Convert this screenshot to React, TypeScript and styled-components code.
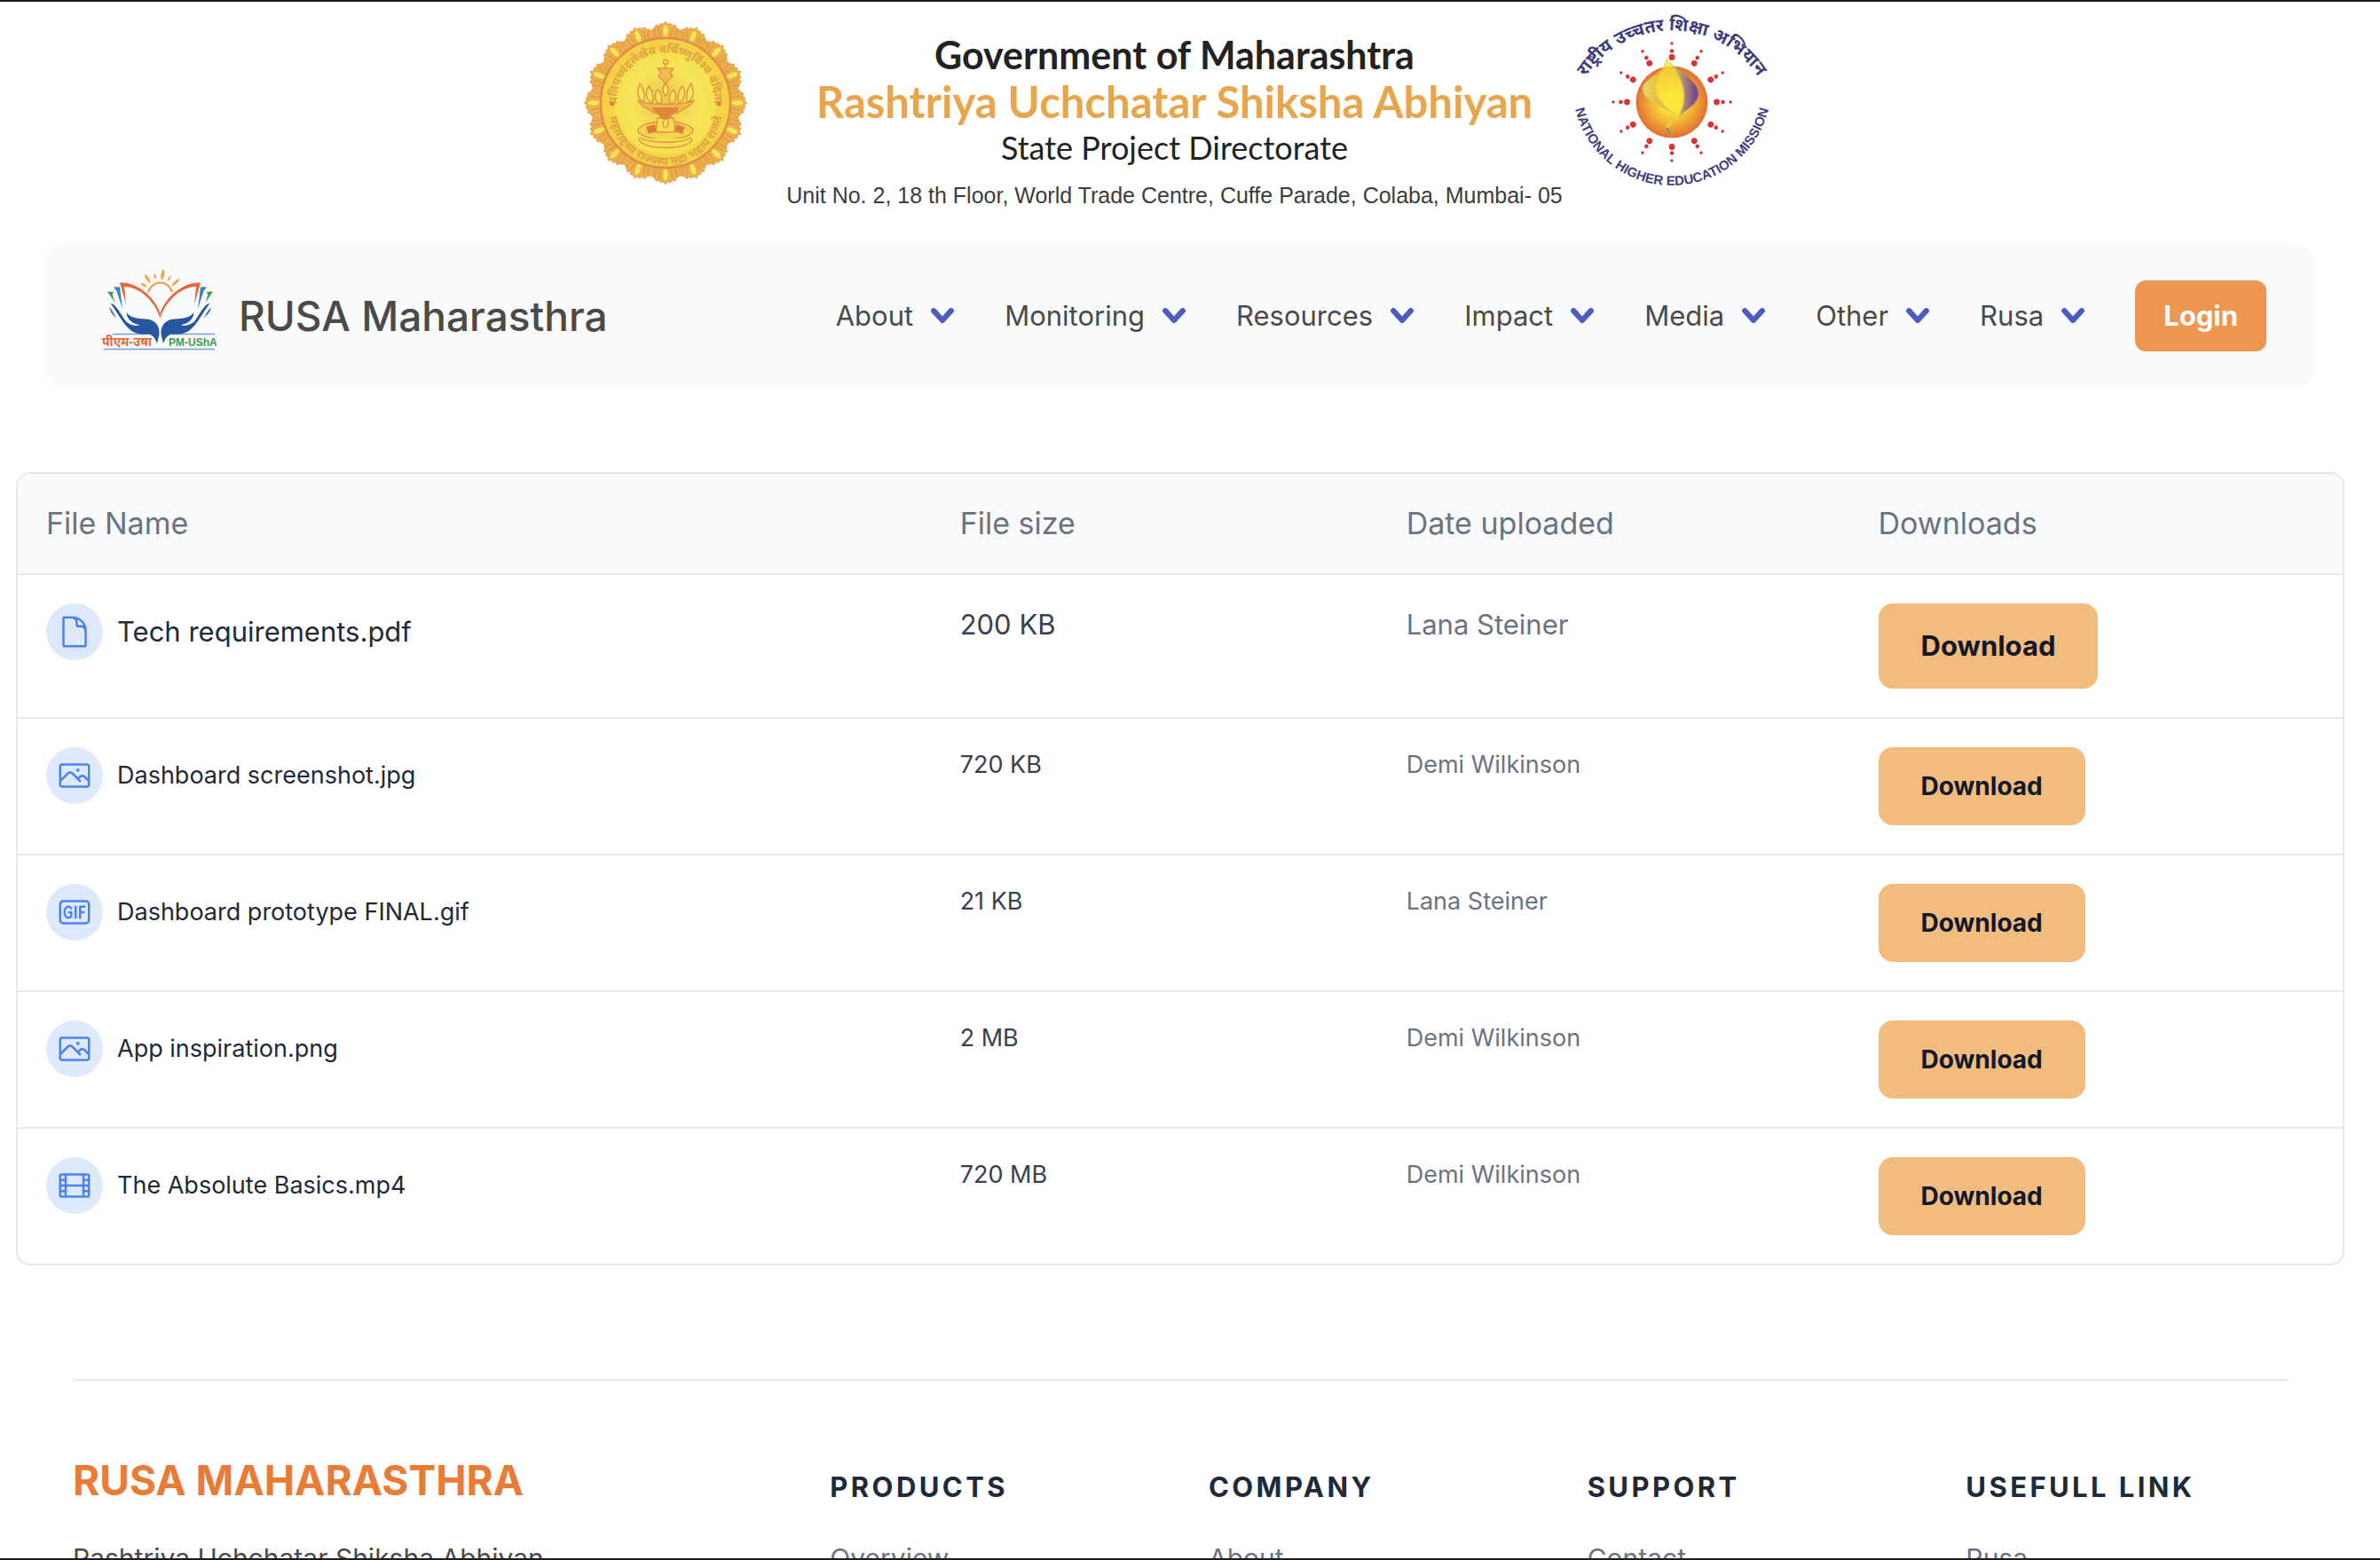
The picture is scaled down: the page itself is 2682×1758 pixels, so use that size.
import React from "react";
import styled, { createGlobalStyle } from "styled-components";
import {
  HiOutlineDocument,
  HiOutlineFilm,
  HiOutlineGif,
  HiOutlinePhoto,
} from "react-icons/hi2";
import type { IconType } from "react-icons";

const GlobalStyle = createGlobalStyle`
  *, *::before, *::after { box-sizing: border-box; }
  body {
    margin: 0;
    background: #fff;
    color: #4a4a4a;
    font-family: Inter, "Liberation Sans", sans-serif;
    font-size: 31px;
    line-height: 48px;
  }
  h1, h2, h3, p, ul { margin: 0; padding: 0; font: inherit; }
  ul { list-style: none; }
  a { color: inherit; text-decoration: none; }
  button { border: 0; font: inherit; cursor: pointer; }
`;

const Page = styled.div`
  height: 100vh;
  overflow: hidden;
  padding-right: 22px;
  border: solid #1b1b1d;
  border-width: 2px 0;
`;

/* Masthead */

const Masthead = styled.header`
  display: flex;
  justify-content: center;
  align-items: flex-start;
  padding: 12px 8px 28px 0;
`;

const SealBox = styled.div`
  display: flex;
  padding: 10px 43px 0 0;
`;

const EmblemBox = styled.div`
  display: flex;
  padding-left: 12px;
`;

const MastheadText = styled.div`
  display: flex;
  flex-direction: column;
  align-items: center;
  padding-top: 22px;
  font-family: Lato, "Liberation Sans", sans-serif;
  line-height: 52px;
  white-space: nowrap;
`;

const Government = styled.p`
  color: #222;
  font-size: 43px;
  font-weight: 700;
`;

const Mission = styled.h1`
  color: #e8a54c;
  font-size: 49px;
  font-weight: 700;
`;

const Directorate = styled.p`
  color: #222;
  font-size: 36px;
`;

const Address = styled.p`
  color: #3c3c3c;
  font-family: "Liberation Sans", Arial, sans-serif;
  font-size: 25px;
  line-height: 56px;
`;

/* Navigation */

const NavBar = styled.nav`
  display: flex;
  align-items: center;
  justify-content: space-between;
  height: 160px;
  margin: 0 50px;
  padding: 0 56px 0 64px;
  border-radius: 24px;
  background: #f9fafc;
`;

const Brand = styled.a`
  display: flex;
  align-items: center;
  gap: 25px;
  font-size: 46px;
  font-weight: 500;
`;

const Menu = styled.ul`
  display: flex;
  align-items: center;
  gap: 57px;
`;

const MenuButton = styled.button`
  display: flex;
  align-items: center;
  gap: 20px;
  padding: 0;
  background: none;
  color: inherit;
`;

const LoginButton = styled.button`
  height: 80px;
  padding: 0 32px;
  border-radius: 12px;
  background: #ee964f;
  color: #fff;
  font-weight: 700;
`;

/* File table */

const TableCard = styled.main`
  margin: 96px 18px 128px;
  overflow: hidden;
  border: 2px solid #e5e7eb;
  border-radius: 16px;
`;

const Table = styled.table`
  width: 100%;
  table-layout: fixed;
  border-spacing: 0;
`;

const Column = styled.col<{ $share: number }>`
  width: ${(p) => p.$share}%;
`;

const HeadCell = styled.th`
  padding: 28px 32px;
  border-bottom: 2px solid #e5e7eb;
  background: #f9fafb;
  color: #6b7280;
  font-size: 34px;
  font-weight: 400;
  line-height: 56px;
  text-align: left;
`;

const Row = styled.tr<{ $large?: boolean }>`
  font-size: ${(p) => (p.$large ? 31 : 27)}px;
  line-height: ${(p) => (p.$large ? 48 : 40)}px;

  &:not(:last-child) > td {
    border-bottom: 2px solid #e5e7eb;
  }
`;

const Cell = styled.td<{ $color?: string }>`
  padding: 32px;
  color: ${(p) => p.$color ?? "#1f2937"};
  vertical-align: top;
`;

const FileName = styled.div`
  display: flex;
  align-items: center;
  gap: 16px;
`;

const FileBadge = styled.span`
  display: grid;
  place-items: center;
  width: 64px;
  height: 64px;
  border-radius: 50%;
  background: #dee9fc;
  color: #4b82f1;
  font-size: 40px;
`;

const DownloadButton = styled.button<{ $large?: boolean }>`
  display: block;
  padding: 24px 48px;
  border-radius: 16px;
  background: #f3bc7f;
  color: #111827;
  font-size: ${(p) => (p.$large ? 31 : 28)}px;
  font-weight: 700;
  line-height: inherit;
`;

/* Footer */

const Footer = styled.footer`
  display: grid;
  grid-template-columns: repeat(6, 1fr);
  gap: 64px;
  margin: 0 82px;
  padding-top: 80px;
  border-top: 2px solid #e5e7eb;
  font-size: 30px;
`;

const FooterAbout = styled.section`
  display: grid;
  grid-column: span 2;
  align-content: start;
  gap: 32px;
`;

const FooterBrand = styled.h2`
  color: #e87c36;
  font-size: 46px;
  font-weight: 700;
  line-height: 64px;
`;

const FooterColumn = styled.section`
  display: grid;
  align-content: start;
  gap: 32px;
  padding-top: 16px;
  color: #6b7280;
`;

const FooterHeading = styled.h3`
  color: #1f2937;
  font-size: 31px;
  font-weight: 700;
  letter-spacing: 0.11em;
  text-transform: uppercase;
  white-space: nowrap;
`;

const LogoText = styled.text`
  font-family: "Liberation Sans", "Noto Sans", sans-serif;
  font-weight: 700;
`;

const Chevron = () => (
  <svg width="26" height="18" viewBox="0 0 26 18" fill="none" aria-hidden="true">
    <path d="M3.2 3.2 13 14 22.8 3.2" stroke="#4e5bc0" strokeWidth="6.2" strokeLinecap="round" strokeLinejoin="round" />
  </svg>
);

const petals = Array.from({ length: 16 }, (_, i) => i * 22.5);

const StateSeal = () => (
  <svg width="186" height="184" viewBox="0 0 186 184" role="img" aria-label="Seal of Maharashtra">
    <defs>
      <radialGradient id="sealFace">
        <stop offset="0" stopColor="#ecc04c" />
        <stop offset="0.55" stopColor="#f6e65a" />
        <stop offset="0.78" stopColor="#f5e04f" />
        <stop offset="0.8" stopColor="#f3d545" />
        <stop offset="1" stopColor="#f4cf48" />
      </radialGradient>
      <path id="sealTop" d="M38.500 98A55 55 0 1 1 147.500 98" />
      <path id="sealBottom" d="M29 98A64 64 0 0 0 157 98" />
    </defs>
    {petals.map((a) => (
      <g key={a} transform={`rotate(${a} 93 92)`}>
        <path
          d="M93 0 95 3 99 2.500 100 5 104 4 105 7 109 10 110 26 76 26 77 10 81 7 82 4 86 5 87 2.500 91 3Z"
          fill="#eab04c"
          stroke="#e59a48"
          strokeWidth="0.8"
        />
        <path d="M80 8 84 22M85 7 88 22M101 7 98 22M106 8 102 22" stroke="#e39245" strokeWidth="1.1" />
      </g>
    ))}
    {petals.map((a) => (
      <ellipse key={a} cx="93" cy="11" rx="3.4" ry="7.400" fill="#f6e558" stroke="#e9a244" strokeWidth="0.8" transform={`rotate(${a} 93 92)`} />
    ))}
    <circle cx="93" cy="92" r="73" fill="url(#sealFace)" stroke="#e28c43" strokeWidth="2.4" />
    <LogoText fontSize="13" fill="#dfa443" textAnchor="middle">
      <textPath href="#sealTop" startOffset="50%">प्रतिपच्चंद्रलेखेव वर्धिष्णुर्विश्व वंदिता</textPath>
    </LogoText>
    <LogoText fontSize="13" fill="#dfa443" textAnchor="middle">
      <textPath href="#sealBottom" startOffset="50%">महाराष्ट्रस्य राज्यस्य मुद्रा भद्राय राजते</textPath>
    </LogoText>
    <circle cx="33" cy="93" r="2.500" fill="#d98039" />
    <circle cx="153" cy="93" r="2.500" fill="#d98039" />
    <g fill="none" stroke="#e09142" strokeWidth="1.4" strokeLinejoin="round">
      <circle cx="93" cy="46" r="2.500" />
      <path d="M93 49V53M84 53H102L98 58 101 62 96 66 93 72 90 66 85 62 88 58Z" fill="#edc04a" />
      <path d="M93 70C88 76 90 82 93 84C96 82 98 76 93 70Z" fill="#f6e65a" />
      <path d="M64 70C60 80 62 88 68 91C71 84 68 76 64 70ZM122 70C126 80 124 88 118 91C115 84 118 76 122 70Z" fill="#f6e65a" />
      <path d="M74 73C69 81 72 89 78 92C80 85 78 78 74 73ZM112 73C117 81 114 89 108 92C106 85 108 78 112 73Z" fill="#f6e65a" />
      <path d="M84 77C79 84 82 91 87 93C90 87 88 81 84 77ZM102 77C107 84 104 91 99 93C96 87 98 81 102 77Z" fill="#f6e65a" />
      <path d="M62 89C72 95 114 95 125 89C122 97 110 99 107 103H79C76 99 65 97 62 89Z" fill="#edbb48" />
      <ellipse cx="93" cy="123" rx="31" ry="10" fill="#f3d54d" />
      <path d="M63 132C63 146 123 146 123 132" fill="#f6df52" />
      <path d="M64 131C75 138 111 138 122 131" />
      <path d="M84 109H102L104 125H82Z" fill="#f6df52" />
      <ellipse cx="93" cy="115" rx="3" ry="5" />
    </g>
    <path d="M78 97H108C107 104 100 103 98 110H88C86 103 79 104 78 97Z" fill="#e0853e" />
    <path d="M71 119 81 116 83 124 74 127ZM115 119 105 116 103 124 112 127Z" fill="#dd7f3b" />
  </svg>
);

const rays = Array.from({ length: 12 }, (_, i) => i * 30);

const MissionEmblem = () => (
  <svg width="222" height="200" viewBox="0 0 222 200" role="img" aria-label="National Higher Education Mission">
    <defs>
      <radialGradient id="sun">
        <stop offset="0.2" stopColor="#fbef3c" />
        <stop offset="0.65" stopColor="#f0a835" />
        <stop offset="1" stopColor="#e07032" />
      </radialGradient>
      <linearGradient id="flameEdge">
        <stop offset="0" stopColor="#ead75a" />
        <stop offset="0.4" stopColor="#bfa070" />
        <stop offset="0.9" stopColor="#774a8c" />
      </linearGradient>
      <linearGradient id="flameLeft">
        <stop offset="0" stopColor="#e8d763" />
        <stop offset="0.6" stopColor="#e8b243" />
        <stop offset="1" stopColor="#cbb070" />
      </linearGradient>
      <path id="emblemTop" d="M8 82A117 117 0 0 1 214 82" />
      <path id="emblemBottom" d="M1 104A112 112 0 0 0 221 104" />
    </defs>
    <LogoText fontSize="20" fill="#3f3c80" textAnchor="middle">
      <textPath href="#emblemTop" startOffset="50%">राष्ट्रीय उच्चतर शिक्षा अभियान</textPath>
    </LogoText>
    <LogoText fontSize="15" fill="#3f3c80" textAnchor="middle">
      <textPath href="#emblemBottom" startOffset="50%">NATIONAL HIGHER EDUCATION MISSION</textPath>
    </LogoText>
    {rays.map((a) => (
      <g key={a} fill="#d93338" transform={`rotate(${a} 111 101)`}>
        <circle cx="111" cy="50.500" r="3.400" />
        <circle cx="111" cy="43.500" r="2.300" />
        <circle cx="111" cy="35" r="1.700" />
      </g>
    ))}
    <circle cx="111" cy="101" r="40.500" fill="url(#sun)" />
    <path d="M105 52C103 70 78 74 78 87C79 100 106 108 118 118C100 104 92 98 92 82C94 72 102 64 105 52Z" fill="url(#flameLeft)" />
    <path d="M105 52C116 66 141 76 141 92C140 104 126 110 118 118C130 94 122 72 105 52Z" fill="url(#flameEdge)" />
    <path d="M105 52C119 68 134 92 118 118C103 104 90 96 93 80C95 70 103 66 105 52Z" fill="#f8e63a" fillOpacity="0.75" stroke="#e8c84a" strokeWidth="1" />
    <path d="M118 119C106 124 104 130 109 137" fill="none" stroke="#ecd23c" strokeWidth="3.500" strokeLinecap="round" />
    <path d="M106 131 109 137" stroke="#9a8f50" strokeWidth="3" strokeLinecap="round" />
  </svg>
);

const HalfLogo = () => (
  <g>
    <path d="M14 20.500H21L24 45 17.500 25Z" fill="#3b7cc4" />
    <path d="M7 25.500 14.500 26 12.500 28.500 15.500 38Z" fill="#3a9b4c" />
    <path d="M21 15.500C40 14 61 32 66.500 50V56C60 34 41 20 26 20L28 40Z" fill="#e8683a" />
    <path
      d="M10.500 39C16 39 20 48 27 58C31 63 38 65 43.500 63.500C38 62 29 59 28.500 49C33 55 40 56 50 56.500C62 57 66 65 65.500 74L63 84C60 76 57 73 50 73.500C40 74 34 71 28 64C20 54 17 47 10.500 39Z"
      fill="#2556a0"
    />
    <path d="M9 43C12 46 14 50 17 55C13 52 10 48 9 43Z" fill="#2556a0" />
  </g>
);

const BrandLogo = () => (
  <svg width="130" height="106" viewBox="0 0 130 106" role="img" aria-label="PM-USHA">
    <g fill="#f0a23c">
      <path d="M70 0C72 5 71 10 68.500 13C66.500 9 67 4 70 0Z" />
      <path d="M49 6C53 8 55 12 55.500 16C51 14 49 10 49 6Z" />
      <path d="M59.500 5C62 7 62.500 10 61.500 12C59.500 10 59 8 59.500 5Z" />
      <path d="M78.500 7.500C79 10 77 13 74.500 14C75 11 76 9 78.500 7.500Z" />
      <path d="M88.500 11C87 15 84 18 79 19.500C81 15 84 12 88.500 11Z" />
      <path d="M44.500 16C48 16 51 18 51.500 21C48 20.500 46 19 44.500 16Z" />
    </g>
    <path d="M53 26C58 12 75 12 80 26" fill="none" stroke="#f0a23c" strokeWidth="2.400" />
    <path d="M13 73.500H52M80 73.500H128M3 90.500H128" stroke="#7b9ccf" strokeWidth="1.400" />
    <HalfLogo />
    <g transform="matrix(-1 0 0 1 133 0)">
      <HalfLogo />
    </g>
    <LogoText x="1" y="87" fontSize="14" fill="#e8683a">पीएम-उषा</LogoText>
    <LogoText x="76" y="87" fontSize="12" fill="#3a9b4c">PM-UShA</LogoText>
  </svg>
);

const menu = ["About", "Monitoring", "Resources", "Impact", "Media", "Other", "Rusa"];

const files: { name: string; size: string; owner: string; icon: IconType; large?: boolean }[] = [
  { name: "Tech requirements.pdf", size: "200 KB", owner: "Lana Steiner", icon: HiOutlineDocument, large: true },
  { name: "Dashboard screenshot.jpg", size: "720 KB", owner: "Demi Wilkinson", icon: HiOutlinePhoto },
  { name: "Dashboard prototype FINAL.gif", size: "21 KB", owner: "Lana Steiner", icon: HiOutlineGif },
  { name: "App inspiration.png", size: "2 MB", owner: "Demi Wilkinson", icon: HiOutlinePhoto },
  { name: "The Absolute Basics.mp4", size: "720 MB", owner: "Demi Wilkinson", icon: HiOutlineFilm },
];

const footerLinks = [
  { title: "Products", link: "Overview" },
  { title: "Company", link: "About" },
  { title: "Support", link: "Contact" },
  { title: "Usefull Link", link: "Rusa" },
];

export default function App() {
  return (
    <Page>
      <GlobalStyle />
      <Masthead>
        <SealBox>
          <StateSeal />
        </SealBox>
        <MastheadText>
          <Government>Government of Maharashtra</Government>
          <Mission>Rashtriya Uchchatar Shiksha Abhiyan</Mission>
          <Directorate>State Project Directorate</Directorate>
          <Address>Unit No. 2, 18 th Floor, World Trade Centre, Cuffe Parade, Colaba, Mumbai- 05</Address>
        </MastheadText>
        <EmblemBox>
          <MissionEmblem />
        </EmblemBox>
      </Masthead>

      <NavBar>
        <Brand href="#">
          <BrandLogo />
          RUSA Maharasthra
        </Brand>
        <Menu>
          {menu.map((label) => (
            <li key={label}>
              <MenuButton type="button">
                {label}
                <Chevron />
              </MenuButton>
            </li>
          ))}
          <li>
            <LoginButton type="button">Login</LoginButton>
          </li>
        </Menu>
      </NavBar>

      <TableCard>
        <Table>
          <colgroup>
            <Column $share={39.3} />
            <Column $share={19.2} />
            <Column $share={20.3} />
            <Column $share={21.2} />
          </colgroup>
          <thead>
            <tr>
              <HeadCell scope="col">File Name</HeadCell>
              <HeadCell scope="col">File size</HeadCell>
              <HeadCell scope="col">Date uploaded</HeadCell>
              <HeadCell scope="col">Downloads</HeadCell>
            </tr>
          </thead>
          <tbody>
            {files.map(({ name, size, owner, icon: Icon, large }) => (
              <Row key={name} $large={large}>
                <Cell>
                  <FileName>
                    <FileBadge>
                      <Icon />
                    </FileBadge>
                    {name}
                  </FileName>
                </Cell>
                <Cell $color="#374151">{size}</Cell>
                <Cell $color="#6b7280">{owner}</Cell>
                <Cell>
                  <DownloadButton type="button" $large={large}>
                    Download
                  </DownloadButton>
                </Cell>
              </Row>
            ))}
          </tbody>
        </Table>
      </TableCard>

      <Footer>
        <FooterAbout>
          <FooterBrand>RUSA MAHARASTHRA</FooterBrand>
          <p>Rashtriya Uchchatar Shiksha Abhiyan</p>
        </FooterAbout>
        {footerLinks.map(({ title, link }) => (
          <FooterColumn key={title}>
            <FooterHeading>{title}</FooterHeading>
            <a href="#">{link}</a>
          </FooterColumn>
        ))}
      </Footer>
    </Page>
  );
}
